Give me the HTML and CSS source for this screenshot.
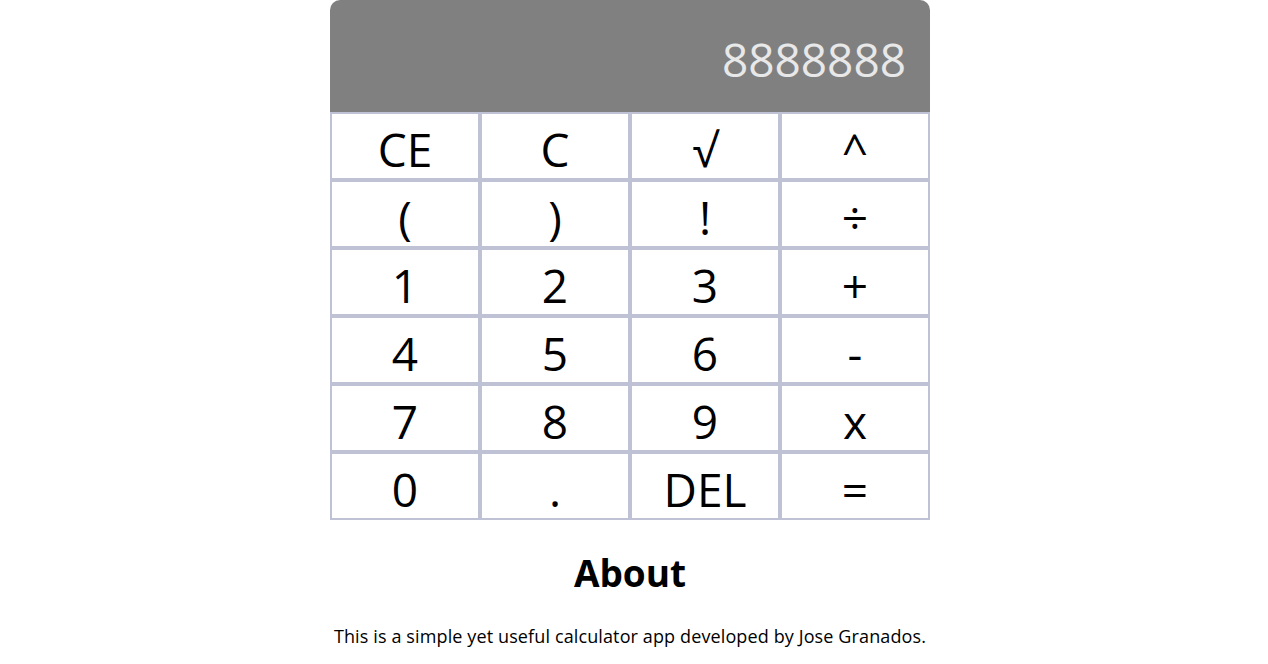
FILE: index.html
```html
<!DOCTYPE html>
<html>
<head>
<meta charset="utf-8">
<link rel="stylesheet" href="styles.css">
</head>
<body>
<main class="calc">
  <div class="display">8888888</div>
  <div class="keys">
    <button class="key">CE</button>
    <button class="key">C</button>
    <button class="key">√</button>
    <button class="key">^</button>
    <button class="key">(</button>
    <button class="key">)</button>
    <button class="key">!</button>
    <button class="key">÷</button>
    <button class="key">1</button>
    <button class="key">2</button>
    <button class="key">3</button>
    <button class="key">+</button>
    <button class="key">4</button>
    <button class="key">5</button>
    <button class="key">6</button>
    <button class="key">-</button>
    <button class="key">7</button>
    <button class="key">8</button>
    <button class="key">9</button>
    <button class="key">x</button>
    <button class="key">0</button>
    <button class="key">.</button>
    <button class="key">DEL</button>
    <button class="key">=</button>
  </div>
</main>
<section class="about">
  <h2 class="about-title">About</h2>
  <p class="about-text">This is a simple yet useful calculator app developed by Jose Granados.</p>
</section>
</body>
</html>
```
FILE: styles.css
```css
html, body {
  margin: 0;
  padding: 0;
  background: #ffffff;
}
body {
  font-family: "Open Sans", "Noto Sans", sans-serif;
  color: #000;
  padding-right: 8px;
}
.calc {
  width: 600px;
  margin: 0 auto;
}
.display {
  height: 112px;
  box-sizing: border-box;
  background: #808080;
  border-radius: 10px 10px 0 0;
  color: #e8e8e8;
  font-size: 46px;
  line-height: 1;
  text-align: right;
  padding: 36px 24px 0 0;
}
.keys {
  display: grid;
  grid-template-columns: repeat(4, 150px);
  grid-auto-rows: 68px;
}
.key {
  margin: 0;
  border: 2px solid #bec2d4;
  background: #fff;
  font-family: inherit;
  font-size: 46px;
  line-height: 1;
  color: #000;
  padding: 5px 0 0 0;
}
.about {
  text-align: center;
}
.about-title {
  margin: 31px 0 0 0;
  font-size: 37px;
  line-height: 44px;
  font-weight: 700;
}
.about-text {
  margin: 29px 0 0 0;
  font-size: 18px;
  line-height: 24px;
  letter-spacing: 0.12px;
}
```
